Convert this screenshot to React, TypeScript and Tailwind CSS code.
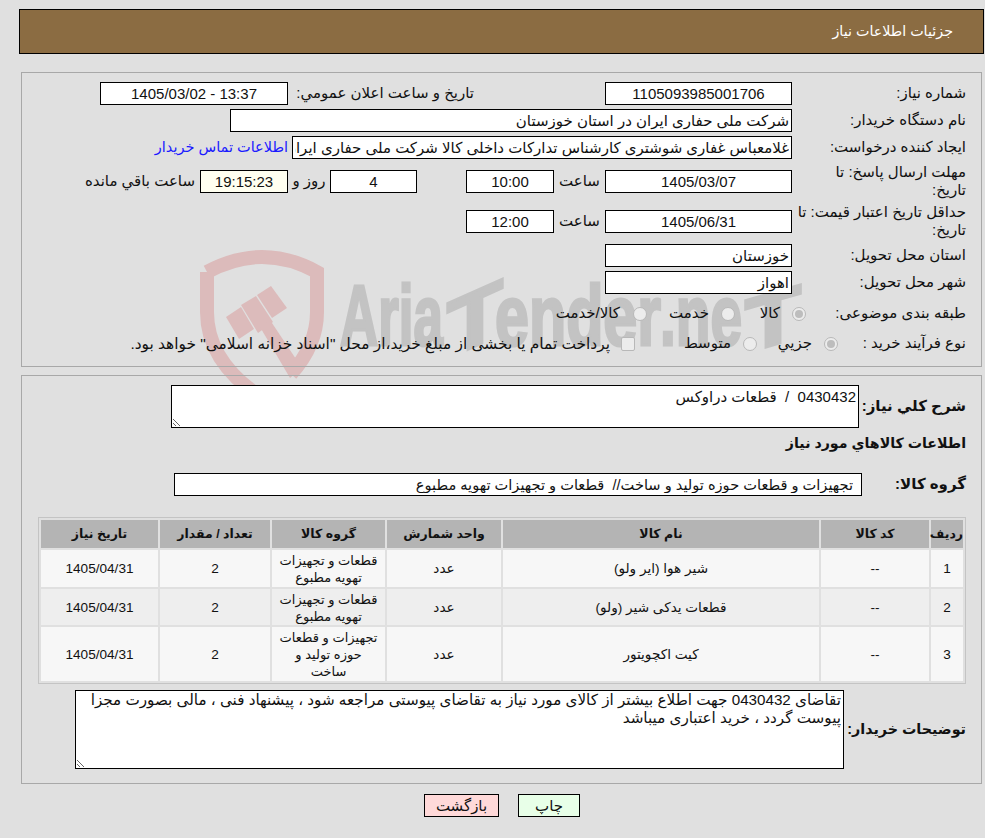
import React from "react";

const inputBase = "h-[23px] border border-black px-[2px] text-[#111] outline-none shrink-0";

function Field({ value, className = "", yellow = false }: { value: string; className?: string; yellow?: boolean }) {
  return <input readOnly value={value} className={`${inputBase} ${yellow ? "bg-[#fffff0]" : "bg-white"} ${className}`} />;
}

function Radio({ checked = false }: { checked?: boolean }) {
  return (
    <span className="flex h-[14px] w-[14px] shrink-0 items-center justify-center rounded-full border border-[#b8b8b8] bg-[#ececec]">
      {checked && <span className="h-[8px] w-[8px] rounded-full bg-[#bdbdbd]" />}
    </span>
  );
}

function Watermark() {
  const textClass = "fill-[#c3c3c3] stroke-[#c3c3c3] stroke-[3px] font-bold";
  return (
    <svg className="absolute left-0 top-0 h-[838px] w-[985px] [direction:ltr]" viewBox="0 0 985 838">
      <g fill="none" stroke="#dcbbbb" strokeWidth="14">
        <path d="M207 272 Q235 257 262 257 Q290 257 317 272 V312 Q317 345 291 374" />
        <path d="M207 272 V312 Q207 362 262 398" />
      </g>
      <g fill="#dcbbbb">
        <polygon points="226,317 241,307 254,329 239,339" />
        <polygon points="241,305 256,296 273,322 258,333" />
        <polygon points="257,295 271,286 287,308 272,318" />
        <polygon points="260,327 270,320 302,368 290,378" />
      </g>
      <text x="340" y="345" fontSize="86" textLength="103" lengthAdjust="spacingAndGlyphs" className={textClass}>Aria</text>
      <text x="447" y="345" fontSize="80" textLength="56" lengthAdjust="spacingAndGlyphs" transform="translate(478 345) skewY(-24) translate(-478 -345)" className={textClass}>T</text>
      <text x="495" y="345" fontSize="86" textLength="166" lengthAdjust="spacingAndGlyphs" className={textClass}>ender</text>
      <text x="660" y="345" fontSize="86" textLength="82" lengthAdjust="spacingAndGlyphs" className={textClass}>.ne</text>
      <text x="745" y="345" fontSize="76" textLength="56" lengthAdjust="spacingAndGlyphs" transform="translate(773 345) skewY(-16) translate(-773 -345)" className={textClass}>T</text>
    </svg>
  );
}

const rows = [
  { n: "1", code: "--", name: "شیر هوا (ایر ولو)", unit: "عدد", group: ["قطعات و تجهیزات", "تهویه مطبوع"], qty: "2", date: "1405/04/31", h: "h-[37px]", bg: "bg-[#f7f7f7]" },
  { n: "2", code: "--", name: "قطعات یدکی شیر (ولو)", unit: "عدد", group: ["قطعات و تجهیزات", "تهویه مطبوع"], qty: "2", date: "1405/04/31", h: "h-[36px]", bg: "bg-[#eeeeee]" },
  { n: "3", code: "--", name: "کیت اکچویتور", unit: "عدد", group: ["تجهیزات و قطعات", "حوزه تولید و", "ساخت"], qty: "2", date: "1405/04/31", h: "h-[54px]", bg: "bg-[#f7f7f7]" },
];

const headers = ["ردیف", "کد کالا", "نام کالا", "واحد شمارش", "گروه کالا", "تعداد / مقدار", "تاریخ نیاز"];

export default function App() {
  return (
    <div dir="rtl" className="relative h-[838px] w-[985px] overflow-hidden bg-[#e0e0e0] font-['Liberation_Sans','DejaVu_Sans',sans-serif] text-[15px] text-[#111]">
      <Watermark />
      <div className="relative">
        <div className="mr-px ml-[19px] mt-[9px] flex h-[45px] items-center border border-black bg-[#8b6c42] pr-[30px] text-[14.3px] text-white">
          جزئیات اطلاعات نیاز
        </div>

        <section className="mr-[3px] ml-[21px] mt-[18px] h-[295px] border border-[#a8a8a8] pt-[9px]">
          <div className="flex h-[23px] items-center">
            <label className="w-[189px] shrink-0 pr-[15px]">شماره نیاز:</label>
            <Field value="1105093985001706" className="w-[187px] text-center" />
            <label className="mr-[131px] w-[186px] shrink-0">تاریخ و ساعت اعلان عمومي:</label>
            <Field value="13:37 - 1405/03/02" className="w-[188px] text-center" />
          </div>
          <div className="mt-[4px] flex h-[23px] items-center">
            <label className="w-[189px] shrink-0 pr-[15px]">نام دستگاه خریدار:</label>
            <Field value="شرکت ملی حفاری ایران در استان خوزستان" className="w-[562px]" />
          </div>
          <div className="mt-[4px] flex h-[23px] items-center">
            <label className="w-[189px] shrink-0 pr-[15px]">ایجاد کننده درخواست:</label>
            <Field value="غلامعباس غفاری شوشتری کارشناس تدارکات داخلی کالا شرکت ملی حفاری ایران در استان خوزستان" className="w-[500px]" />
            <a className="mr-[4px] text-[14.5px] text-[#1a1aff]">اطلاعات تماس خریدار</a>
          </div>
          <div className="mt-[4px] flex h-[36px] items-center">
            <label className="w-[189px] shrink-0 pr-[15px] leading-[18px]">مهلت ارسال پاسخ: تا<br />تاریخ:</label>
            <Field value="1405/03/07" className="w-[187px] text-center" />
            <span className="w-[51px] shrink-0 text-center">ساعت</span>
            <Field value="10:00" className="w-[88px] text-center" />
            <span className="w-[49px] shrink-0" />
            <Field value="4" className="w-[87px] text-center" />
            <span className="w-[42px] shrink-0 text-center">روز و</span>
            <Field value="19:15:23" yellow className="w-[88px] text-center" />
            <span className="mr-[5px]">ساعت باقي مانده</span>
          </div>
          <div className="mt-[4px] flex h-[36px] items-center">
            <label className="w-[189px] shrink-0 pr-[15px] leading-[18px]">حداقل تاریخ اعتبار قیمت: تا<br />تاریخ:</label>
            <Field value="1405/06/31" className="w-[187px] text-center" />
            <span className="w-[51px] shrink-0 text-center">ساعت</span>
            <Field value="12:00" className="w-[88px] text-center" />
          </div>
          <div className="mt-[5px] flex h-[23px] items-center">
            <label className="w-[189px] shrink-0 pr-[15px]">استان محل تحویل:</label>
            <Field value="خوزستان" className="w-[187px]" />
          </div>
          <div className="mt-[4px] flex h-[23px] items-center">
            <label className="w-[189px] shrink-0 pr-[15px]">شهر محل تحویل:</label>
            <Field value="اهواز" className="w-[187px]" />
          </div>
          <div className="mt-[8px] flex h-[23px] items-center">
            <label className="w-[175px] shrink-0 pr-[15px]">طبقه بندی موضوعی:</label>
            <Radio checked />
            <span className="mr-[12px] w-[45px] shrink-0">کالا</span>
            <Radio />
            <span className="mr-[12px] w-[62px] shrink-0">خدمت</span>
            <Radio />
            <span className="mr-[13px]">کالا/خدمت</span>
          </div>
          <div className="mt-[7px] flex h-[23px] items-center">
            <label className="w-[143px] shrink-0 pr-[15px]">نوع فرآیند خرید :</label>
            <Radio checked />
            <span className="mr-[12px] w-[55px] shrink-0">جزيي</span>
            <Radio />
            <span className="mr-[12px] w-[96px] shrink-0">متوسط</span>
            <span className="h-[14px] w-[14px] shrink-0 rounded-[2px] border border-[#b8b8b8] bg-[#ececec]" />
            <span className="mr-[11px] text-[15.4px]">پرداخت تمام یا بخشی از مبلغ خرید،از محل "اسناد خزانه اسلامی" خواهد بود.</span>
          </div>
        </section>

        <section className="mr-[3px] ml-[21px] mt-[8px] h-[409px] border border-[#a8a8a8] pt-[9px]">
          <div className="flex items-center">
            <label className="w-[122px] shrink-0 pr-[15px] font-bold whitespace-nowrap">شرح كلي نياز:</label>
            <textarea readOnly value="0430432  /  قطعات دراوکس" className="h-[43px] w-[688px] shrink-0 border border-black bg-white px-[2px] text-[#111] outline-none" />
          </div>
          <div className="mt-[6px] h-[18px] pr-[15px] text-[14.2px] font-bold leading-[18px]">اطلاعات كالاهاي مورد نياز</div>
          <div className="mt-[21px] flex h-[23px] items-center">
            <label className="w-[119px] shrink-0 pr-[15px] font-bold">گروه كالا:</label>
            <input readOnly value="تجهیزات و قطعات حوزه تولید و ساخت//  قطعات و تجهیزات تهویه مطبوع" className="h-[23px] w-[688px] shrink-0 border border-black bg-white pr-[8px] text-[14.6px] text-[#111] outline-none" />
          </div>
          <div className="mr-[15px] mt-[21px] w-[928px]">
            <table className="w-[928px] table-fixed border-separate border-spacing-[2px] border border-[#c4c4c4] text-center text-[13.6px]">
              <colgroup>
                <col className="w-[32px]" />
                <col className="w-[108px]" />
                <col className="w-[316px]" />
                <col className="w-[114px]" />
                <col className="w-[113px]" />
                <col className="w-[110px]" />
                <col className="w-[117px]" />
              </colgroup>
              <thead>
                <tr>
                  {headers.map((h) => (
                    <th key={h} className="h-[28px] bg-[#b4b4b4] p-0 text-[12.5px] font-bold whitespace-nowrap">{h}</th>
                  ))}
                </tr>
              </thead>
              <tbody>
                {rows.map((r) => (
                  <tr key={r.n}>
                    <td className={`${r.h} ${r.bg} p-0 pt-[2px]`}>{r.n}</td>
                    <td className={`${r.h} ${r.bg} p-0 pt-[2px]`}>{r.code}</td>
                    <td className={`${r.h} ${r.bg} p-0 pt-[2px]`}>{r.name}</td>
                    <td className={`${r.h} ${r.bg} p-0 pt-[2px]`}>{r.unit}</td>
                    <td className={`${r.h} ${r.bg} p-0 pt-[1px] text-[13px] leading-[17px]`}>
                      {r.group.map((line) => (
                        <span key={line} className="block whitespace-nowrap">{line}</span>
                      ))}
                    </td>
                    <td className={`${r.h} ${r.bg} p-0 pt-[2px]`}>{r.qty}</td>
                    <td className={`${r.h} ${r.bg} p-0 pt-[2px]`}>{r.date}</td>
                  </tr>
                ))}
              </tbody>
            </table>
          </div>
          <div className="mt-[6px] flex items-center">
            <label className="w-[137px] shrink-0 pr-[15px] text-[14.3px] font-bold whitespace-nowrap">توضيحات خريدار:</label>
            <textarea readOnly value="تقاضای 0430432 جهت اطلاع بیشتر از کالای مورد نیاز به تقاضای پیوستی مراجعه شود ، پیشنهاد فنی ، مالی بصورت مجزا پیوست گردد ، خرید اعتباری میباشد" className="h-[79px] w-[769px] shrink-0 border border-black bg-white px-[2px] text-[15.2px] text-[#111] leading-[18px] outline-none" />
          </div>
        </section>

        <div className="mt-[10px] flex justify-center gap-[19px] pl-[19px]">
          <button className="h-[23px] w-[62px] border border-black bg-[#e8ffe8]">چاپ</button>
          <button className="h-[23px] w-[75px] border border-black bg-[#ffd9d9]">بازگشت</button>
        </div>
      </div>
    </div>
  );
}
